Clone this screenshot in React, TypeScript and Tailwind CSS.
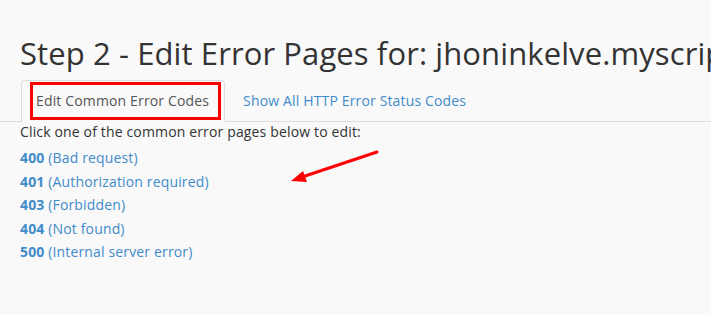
import React from "react";

const codes = [
  { code: "400", label: "(Bad request)" },
  { code: "401", label: "(Authorization required)" },
  { code: "403", label: "(Forbidden)" },
  { code: "404", label: "(Not found)" },
  { code: "500", label: "(Internal server error)" },
];

function App() {
  return (
    <div
      className="relative w-[711px] h-[315px] overflow-hidden bg-[#f9f9f9] text-[#333] pl-5"
      style={{ fontFamily: '"Open Sans", sans-serif' }}
    >
      <h1 className="pt-[37px] text-[31px] leading-[33px] tracking-[0.1px] whitespace-nowrap text-[#333]">
        Step 2 - Edit Error Pages for: jhoninkelve.myscriptcase.com
      </h1>

      <ul className="mt-[10px] -ml-5 pl-[21px] flex border-b border-[#ddd] text-[14px] leading-5 tracking-[0.15px]">
        <li className="-mb-px relative">
          <span className="block pl-[14px] pr-[15px] py-[10px] border border-[#ddd] border-b-transparent rounded-t bg-[#f9f9f9] text-[#555] mr-[2px]">
            Edit Common Error Codes
          </span>
          {/* annotation */}
          <span className="absolute left-[9px] top-[2px] w-[191px] h-[38px] border-[3px] border-[#f00]" />
        </li>
        <li className="-mb-px">
          <span className="block px-[15px] py-[10px] border border-transparent text-[#428bca]">
            Show All HTTP Error Status Codes
          </span>
        </li>
      </ul>

      <p className="text-[14px] leading-5 tracking-[0.15px]">
        Click one of the common error pages below to edit:
      </p>

      <ul className="mt-1 text-[14px] leading-[23.5px] tracking-[0.15px] text-[#428bca]">
        {codes.map((c) => (
          <li key={c.code}>
            <span className="font-bold">{c.code}</span> {c.label}
          </li>
        ))}
      </ul>

      {/* red annotation arrow */}
      <svg
        className="absolute left-0 top-0 pointer-events-none"
        width="711"
        height="315"
        viewBox="0 0 711 315"
      >
        <line x1="377" y1="152" x2="302" y2="177" stroke="#f00" strokeWidth="3" strokeLinecap="round" />
        <polygon points="291,181 303,171 307,182" fill="#f00" />
      </svg>
    </div>
  );
}

export default App;
